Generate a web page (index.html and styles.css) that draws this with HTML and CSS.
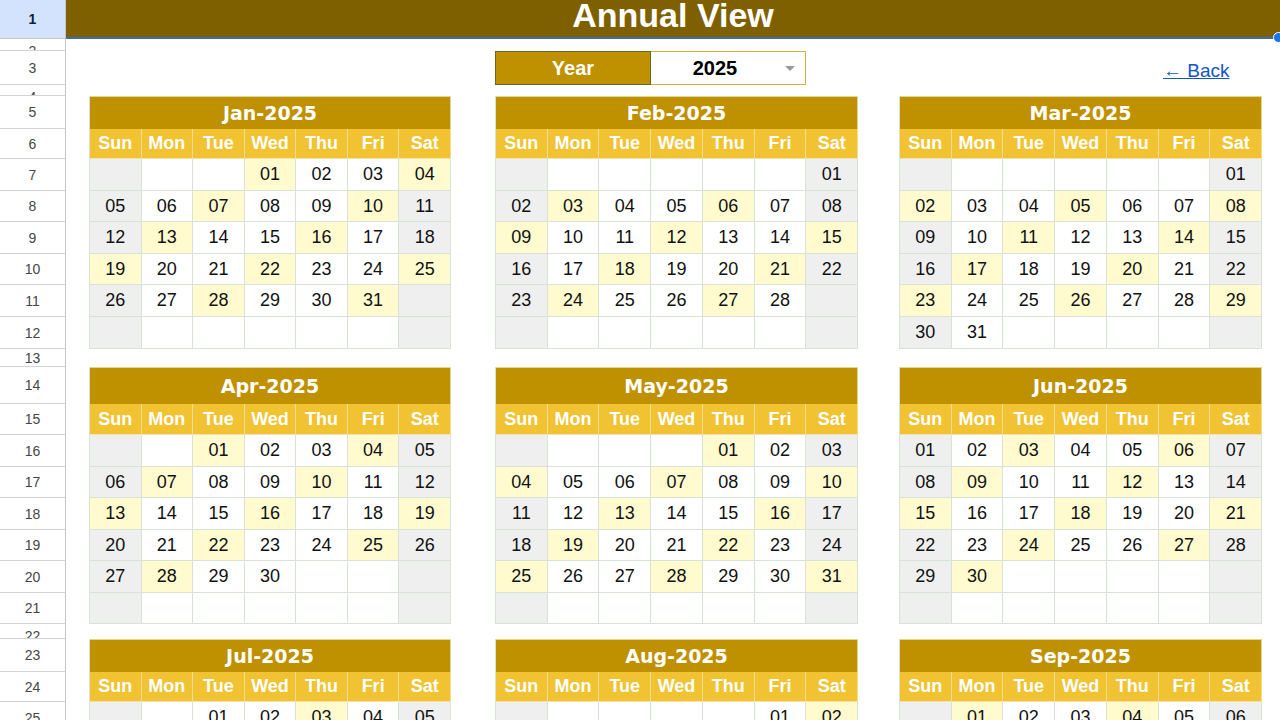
FILE: index.html
```html
<!DOCTYPE html>
<html lang="en">
<head>
<meta charset="utf-8">
<title>Annual View</title>
<link rel="stylesheet" href="styles.css">
</head>
<body>
<div class="sheet">
  <div class="title">Annual View</div>

  <div class="toolbar">
    <div class="yearbox">
      <div class="ylabel">Year</div>
      <div class="yvalue"><span class="yval">2025</span><span class="caret"></span></div>
    </div>
    <a class="back" href="#">&larr; Back</a>
  </div>

  <div class="band band1">
    <div class="cal c1">
      <div class="mt">Jan-2025</div>
      <span class="dh">Sun</span><span class="dh">Mon</span><span class="dh">Tue</span><span class="dh">Wed</span><span class="dh">Thu</span><span class="dh">Fri</span><span class="dh">Sat</span>
      <span class="e"></span><span></span><span></span><span class="h">01</span><span>02</span><span>03</span><span class="h">04</span>
      <span class="e">05</span><span>06</span><span class="h">07</span><span>08</span><span>09</span><span class="h">10</span><span class="e">11</span>
      <span class="e">12</span><span class="h">13</span><span>14</span><span>15</span><span class="h">16</span><span>17</span><span class="e">18</span>
      <span class="h">19</span><span>20</span><span>21</span><span class="h">22</span><span>23</span><span>24</span><span class="h">25</span>
      <span class="e">26</span><span>27</span><span class="h">28</span><span>29</span><span>30</span><span class="h">31</span><span class="e"></span>
      <span class="e"></span><span></span><span></span><span></span><span></span><span></span><span class="e"></span>
    </div>
    <div class="cal c2">
      <div class="mt">Feb-2025</div>
      <span class="dh">Sun</span><span class="dh">Mon</span><span class="dh">Tue</span><span class="dh">Wed</span><span class="dh">Thu</span><span class="dh">Fri</span><span class="dh">Sat</span>
      <span class="e"></span><span></span><span></span><span></span><span></span><span></span><span class="e">01</span>
      <span class="e">02</span><span class="h">03</span><span>04</span><span>05</span><span class="h">06</span><span>07</span><span class="e">08</span>
      <span class="h">09</span><span>10</span><span>11</span><span class="h">12</span><span>13</span><span>14</span><span class="h">15</span>
      <span class="e">16</span><span>17</span><span class="h">18</span><span>19</span><span>20</span><span class="h">21</span><span class="e">22</span>
      <span class="e">23</span><span class="h">24</span><span>25</span><span>26</span><span class="h">27</span><span>28</span><span class="e"></span>
      <span class="e"></span><span></span><span></span><span></span><span></span><span></span><span class="e"></span>
    </div>
    <div class="cal c3">
      <div class="mt">Mar-2025</div>
      <span class="dh">Sun</span><span class="dh">Mon</span><span class="dh">Tue</span><span class="dh">Wed</span><span class="dh">Thu</span><span class="dh">Fri</span><span class="dh">Sat</span>
      <span class="e"></span><span></span><span></span><span></span><span></span><span></span><span class="e">01</span>
      <span class="h">02</span><span>03</span><span>04</span><span class="h">05</span><span>06</span><span>07</span><span class="h">08</span>
      <span class="e">09</span><span>10</span><span class="h">11</span><span>12</span><span>13</span><span class="h">14</span><span class="e">15</span>
      <span class="e">16</span><span class="h">17</span><span>18</span><span>19</span><span class="h">20</span><span>21</span><span class="e">22</span>
      <span class="h">23</span><span>24</span><span>25</span><span class="h">26</span><span>27</span><span>28</span><span class="h">29</span>
      <span class="e">30</span><span>31</span><span></span><span></span><span></span><span></span><span class="e"></span>
    </div>
  </div>

  <div class="band band2">
    <div class="cal c1">
      <div class="mt">Apr-2025</div>
      <span class="dh">Sun</span><span class="dh">Mon</span><span class="dh">Tue</span><span class="dh">Wed</span><span class="dh">Thu</span><span class="dh">Fri</span><span class="dh">Sat</span>
      <span class="e"></span><span></span><span class="h">01</span><span>02</span><span>03</span><span class="h">04</span><span class="e">05</span>
      <span class="e">06</span><span class="h">07</span><span>08</span><span>09</span><span class="h">10</span><span>11</span><span class="e">12</span>
      <span class="h">13</span><span>14</span><span>15</span><span class="h">16</span><span>17</span><span>18</span><span class="h">19</span>
      <span class="e">20</span><span>21</span><span class="h">22</span><span>23</span><span>24</span><span class="h">25</span><span class="e">26</span>
      <span class="e">27</span><span class="h">28</span><span>29</span><span>30</span><span></span><span></span><span class="e"></span>
      <span class="e"></span><span></span><span></span><span></span><span></span><span></span><span class="e"></span>
    </div>
    <div class="cal c2">
      <div class="mt">May-2025</div>
      <span class="dh">Sun</span><span class="dh">Mon</span><span class="dh">Tue</span><span class="dh">Wed</span><span class="dh">Thu</span><span class="dh">Fri</span><span class="dh">Sat</span>
      <span class="e"></span><span></span><span></span><span></span><span class="h">01</span><span>02</span><span class="e">03</span>
      <span class="h">04</span><span>05</span><span>06</span><span class="h">07</span><span>08</span><span>09</span><span class="h">10</span>
      <span class="e">11</span><span>12</span><span class="h">13</span><span>14</span><span>15</span><span class="h">16</span><span class="e">17</span>
      <span class="e">18</span><span class="h">19</span><span>20</span><span>21</span><span class="h">22</span><span>23</span><span class="e">24</span>
      <span class="h">25</span><span>26</span><span>27</span><span class="h">28</span><span>29</span><span>30</span><span class="h">31</span>
      <span class="e"></span><span></span><span></span><span></span><span></span><span></span><span class="e"></span>
    </div>
    <div class="cal c3">
      <div class="mt">Jun-2025</div>
      <span class="dh">Sun</span><span class="dh">Mon</span><span class="dh">Tue</span><span class="dh">Wed</span><span class="dh">Thu</span><span class="dh">Fri</span><span class="dh">Sat</span>
      <span class="e">01</span><span>02</span><span class="h">03</span><span>04</span><span>05</span><span class="h">06</span><span class="e">07</span>
      <span class="e">08</span><span class="h">09</span><span>10</span><span>11</span><span class="h">12</span><span>13</span><span class="e">14</span>
      <span class="h">15</span><span>16</span><span>17</span><span class="h">18</span><span>19</span><span>20</span><span class="h">21</span>
      <span class="e">22</span><span>23</span><span class="h">24</span><span>25</span><span>26</span><span class="h">27</span><span class="e">28</span>
      <span class="e">29</span><span class="h">30</span><span></span><span></span><span></span><span></span><span class="e"></span>
      <span class="e"></span><span></span><span></span><span></span><span></span><span></span><span class="e"></span>
    </div>
  </div>

  <div class="band band3">
    <div class="cal c1">
      <div class="mt">Jul-2025</div>
      <span class="dh">Sun</span><span class="dh">Mon</span><span class="dh">Tue</span><span class="dh">Wed</span><span class="dh">Thu</span><span class="dh">Fri</span><span class="dh">Sat</span>
      <span class="e"></span><span></span><span>01</span><span>02</span><span class="h">03</span><span>04</span><span class="e">05</span>
      <span class="h">06</span><span>07</span><span>08</span><span class="h">09</span><span>10</span><span>11</span><span class="h">12</span>
      <span class="e">13</span><span>14</span><span class="h">15</span><span>16</span><span>17</span><span class="h">18</span><span class="e">19</span>
      <span class="e">20</span><span class="h">21</span><span>22</span><span>23</span><span class="h">24</span><span>25</span><span class="e">26</span>
      <span class="h">27</span><span>28</span><span>29</span><span class="h">30</span><span>31</span><span></span><span class="e"></span>
      <span class="e"></span><span></span><span></span><span></span><span></span><span></span><span class="e"></span>
    </div>
    <div class="cal c2">
      <div class="mt">Aug-2025</div>
      <span class="dh">Sun</span><span class="dh">Mon</span><span class="dh">Tue</span><span class="dh">Wed</span><span class="dh">Thu</span><span class="dh">Fri</span><span class="dh">Sat</span>
      <span class="e"></span><span></span><span></span><span></span><span></span><span>01</span><span class="h">02</span>
      <span class="e">03</span><span>04</span><span class="h">05</span><span>06</span><span>07</span><span class="h">08</span><span class="e">09</span>
      <span class="e">10</span><span class="h">11</span><span>12</span><span>13</span><span class="h">14</span><span>15</span><span class="e">16</span>
      <span class="h">17</span><span>18</span><span>19</span><span class="h">20</span><span>21</span><span>22</span><span class="h">23</span>
      <span class="e">24</span><span>25</span><span class="h">26</span><span>27</span><span>28</span><span class="h">29</span><span class="e">30</span>
      <span class="e">31</span><span></span><span></span><span></span><span></span><span></span><span class="e"></span>
    </div>
    <div class="cal c3">
      <div class="mt">Sep-2025</div>
      <span class="dh">Sun</span><span class="dh">Mon</span><span class="dh">Tue</span><span class="dh">Wed</span><span class="dh">Thu</span><span class="dh">Fri</span><span class="dh">Sat</span>
      <span class="e"></span><span class="h">01</span><span>02</span><span>03</span><span class="h">04</span><span>05</span><span class="e">06</span>
      <span class="h">07</span><span>08</span><span>09</span><span class="h">10</span><span>11</span><span>12</span><span class="h">13</span>
      <span class="e">14</span><span>15</span><span class="h">16</span><span>17</span><span>18</span><span class="h">19</span><span class="e">20</span>
      <span class="e">21</span><span class="h">22</span><span>23</span><span>24</span><span class="h">25</span><span>26</span><span class="e">27</span>
      <span class="h">28</span><span>29</span><span>30</span><span></span><span></span><span></span><span class="e"></span>
      <span class="e"></span><span></span><span></span><span></span><span></span><span></span><span class="e"></span>
    </div>
  </div>

  <div class="rh sel">1</div>
  <div class="rh cut">2</div>
  <div class="rh">3</div>
  <div class="rh cut">4</div>
  <div class="rh">5</div>
  <div class="rh">6</div>
  <div class="rh">7</div>
  <div class="rh">8</div>
  <div class="rh">9</div>
  <div class="rh">10</div>
  <div class="rh">11</div>
  <div class="rh">12</div>
  <div class="rh">13</div>
  <div class="rh">14</div>
  <div class="rh">15</div>
  <div class="rh">16</div>
  <div class="rh">17</div>
  <div class="rh">18</div>
  <div class="rh">19</div>
  <div class="rh">20</div>
  <div class="rh">21</div>
  <div class="rh cut">22</div>
  <div class="rh">23</div>
  <div class="rh">24</div>
  <div class="rh">25</div>
  <div class="rh">26</div>
  <div class="rh">27</div>
  <div class="rh">28</div>
  <div class="rh">29</div>
  <div class="rh">30</div>
</div>
</body>
</html>
```

FILE: styles.css
```css
html, body {
  margin: 0;
  padding: 0;
  background: #ffffff;
}

body {
  width: 1280px;
  height: 720px;
  overflow: hidden;
  font-family: "Liberation Sans", Arial, sans-serif;
  color: #000;
}

.sheet {
  display: grid;
  grid-template-columns: 66px 1214px;
  grid-template-rows:
    39px 12px 34px 11px
    33px 30px 32px 31px 32px 31px 32px 32px
    18px
    37px 31px 32px 31px 32px 31px 32px 31px
    15px
    33px 30px 32px 31px 32px 31px 32px 31px;
}

/* row headers */
.rh {
  grid-column: 1;
  box-sizing: border-box;
  border-right: 1px solid #c4c7c5;
  border-bottom: 1px solid #d3d3d3;
  display: flex;
  align-items: center;
  justify-content: center;
  font-size: 14px;
  color: #444746;
  overflow: hidden;
  background: #ffffff;
}

.rh.sel {
  background: #d3e3fd;
  color: #0b1f44;
  font-weight: bold;
  border-bottom: 1px solid #c4c7c5;
}

.rh.cut {
  align-items: flex-start;
  padding-top: 4px;
  line-height: 16px;
}

/* title row */
.title {
  grid-column: 2;
  grid-row: 1;
  position: relative;
  background: #7f6000;
  border-bottom: 2px solid #3d6fae;
  color: #ffffff;
  font-weight: bold;
  font-size: 34px;
  line-height: 31px;
  padding-bottom: 6px;
  text-align: center;
}

.title::after {
  content: "";
  position: absolute;
  right: -4px;
  bottom: -6px;
  width: 9px;
  height: 9px;
  border-radius: 50%;
  background: #1a73e8;
  border: 1px solid #ffffff;
}

/* year selector row */
.toolbar {
  grid-column: 2;
  grid-row: 3;
  display: flex;
  align-items: stretch;
  padding-left: 429px;
}

.yearbox {
  display: flex;
  width: 311px;
  box-sizing: border-box;
}

.ylabel {
  width: 156px;
  box-sizing: border-box;
  background: #bf9000;
  border: 1px solid #5e6e21;
  color: #ffffff;
  font-weight: bold;
  font-size: 20px;
  display: flex;
  align-items: center;
  justify-content: center;
}

.yvalue {
  width: 155px;
  box-sizing: border-box;
  background: #ffffff;
  border: 1px solid #d2b13c;
  border-left: none;
  display: flex;
  align-items: center;
}

.yval {
  flex: 1;
  text-align: center;
  font-weight: bold;
  font-size: 20px;
  color: #000;
}

.caret {
  width: 0;
  height: 0;
  border-left: 5px solid transparent;
  border-right: 5px solid transparent;
  border-top: 5px solid #999999;
  margin: 0 10px 0 6px;
}

.back {
  margin-left: 357px;
  align-self: center;
  margin-top: 6px;
  font-size: 19px;
  color: #1155cc;
  text-decoration: underline;
}

/* month bands */
.band {
  grid-column: 2;
  display: grid;
  grid-template-columns: 23px 362px 44px 363px 41px 363px;
  align-items: start;
}

.band1 { grid-row: 5 / 13; }
.band2 { grid-row: 14 / 22; }
.band3 { grid-row: 23 / 31; }

.cal {
  display: grid;
  grid-template-columns: repeat(7, 1fr);
  border-left: 1px solid #d9e2d6;
}

.c1 { grid-column: 2; }
.c2 { grid-column: 4; }
.c3 { grid-column: 6; }

.band1 .cal,
.band3 .cal {
  grid-template-rows: 33px 30px 32px 31px 32px 31px 32px 32px;
}

.band2 .cal {
  grid-template-rows: 37px 31px 32px 31px 32px 31px 32px 31px;
}

.mt {
  grid-column: 1 / -1;
  box-sizing: border-box;
  background: #bf9000;
  border-top: 1px solid #d7d994;
  border-right: 1px solid #d7d994;
  color: #ffffff;
  font-family: "DejaVu Sans", "Liberation Sans", sans-serif;
  font-weight: bold;
  font-size: 19px;
  display: flex;
  align-items: center;
  justify-content: center;
}

.cal > span {
  box-sizing: border-box;
  border-right: 1px solid #d9e2d6;
  border-bottom: 1px solid #d9e2d6;
  display: flex;
  align-items: center;
  justify-content: center;
  font-size: 18px;
  color: #111111;
  background: #ffffff;
}

.cal > span.e { background: #efefef; }
.cal > span.h { background: #fffbcf; }

.cal > span.dh {
  background: #f1c232;
  color: #ffffff;
  font-weight: bold;
  border-right: 1px solid #f7dc92;
  border-bottom: 1px solid #f3e2b0;
}
```
